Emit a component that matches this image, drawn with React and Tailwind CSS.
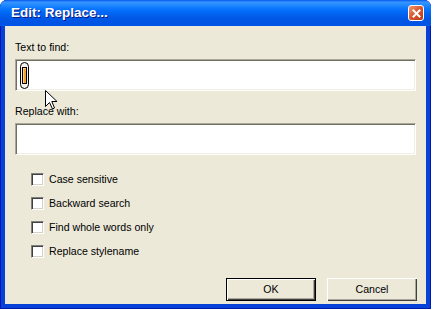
import React from 'react';

const Checkbox = ({ label }) => (
  <div className="flex items-center h-[13px]">
    <div className="w-[13px] h-[13px] border border-t-[#808080] border-l-[#808080] border-r-white border-b-white bg-white shadow-[inset_1px_1px_0_#404040,inset_-1px_-1px_0_#d4d0c8]" />
    <span className="ml-[5px] text-[10.6px] leading-[13px] text-black">{label}</span>
  </div>
);

const TextBox = ({ children }) => (
  <div className="relative h-[32px] w-full bg-white border border-t-[#aca899] border-l-[#aca899] border-r-white border-b-white shadow-[inset_1px_1px_0_#716f64,inset_-1px_-1px_0_#f1efe2]">
    {children}
  </div>
);

const Button = ({ children, primary }) => (
  <button
    className={`w-[90px] h-[23px] text-[10.6px] text-black bg-[#ece9d8] ${
      primary
        ? 'border border-black shadow-[inset_1px_1px_0_#ffffff,inset_-1px_-1px_0_#404040,inset_-2px_-2px_0_#aca899]'
        : 'shadow-[inset_1px_1px_0_#ffffff,inset_-1px_-1px_0_#404040,inset_-2px_-2px_0_#aca899]'
    }`}
  >
    {children}
  </button>
);

export default function App() {
  return (
    <div className="relative w-[433px] h-[310px] bg-white font-['Liberation_Sans',Arial,sans-serif]">
      <div className="w-[431px] h-[309px] flex flex-col rounded-t-[7px] overflow-hidden bg-[#0841d8] shadow-[inset_1px_0_0_#0019b0,inset_-1px_0_0_#0019b0,inset_0_-1px_0_#0019b0]">
        {/* title bar */}
        <div className="h-[26px] flex items-center pl-[11px] pr-[7px] bg-[linear-gradient(to_bottom,#0058ee_0%,#3a93ff_8%,#288eff_16%,#127dff_28%,#036ffc_40%,#0262ee_55%,#0057e5_72%,#0054e3_88%,#0055eb_100%)]">
          <span className="text-white text-[13.5px] font-bold leading-none [text-shadow:1px_1px_0_#0a1883]">
            Edit: Replace...
          </span>
          <div className="ml-auto w-[16px] h-[16px] rounded-[3px] border border-white bg-[linear-gradient(135deg,#f09a76,#d8552a_50%,#b83b12)] flex items-center justify-center">
            <svg width="9" height="9" viewBox="0 0 9 9">
              <path d="M1.5 1.5 L7.5 7.5 M7.5 1.5 L1.5 7.5" stroke="white" strokeWidth="2" strokeLinecap="square" />
            </svg>
          </div>
        </div>

        {/* client area */}
        <div className="flex-1 mx-[5px] mb-[5px] bg-[#ece9d8] flex flex-col px-[10px] pt-[15px] pb-[3px]">
          <label className="text-[10.6px] leading-[13px] text-black">Text to find:</label>
          <div className="mt-[5px]">
            <TextBox>
              <div className="absolute left-[4px] top-[2px] w-[9px] h-[27px] rounded-full border border-black bg-[#f4f2ea] flex items-center justify-center">
                <div className="w-[5px] h-[17px] border border-black bg-[#f0a030] shadow-[inset_1px_1px_0_#ffd080]" />
              </div>
            </TextBox>
          </div>

          <label className="mt-[14px] text-[10.6px] leading-[13px] text-black">Replace with:</label>
          <div className="mt-[5px]">
            <TextBox />
          </div>

          <div className="mt-[18px] pl-[16px] flex flex-col gap-[11px]">
            <Checkbox label="Case sensitive" />
            <Checkbox label="Backward search" />
            <Checkbox label="Find whole words only" />
            <Checkbox label="Replace stylename" />
          </div>

          <div className="mt-auto flex justify-end gap-[11px] -mr-px">
            <Button primary>OK</Button>
            <Button>Cancel</Button>
          </div>
        </div>
      </div>

      {/* mouse pointer */}
      <svg className="absolute left-[45px] top-[90px]" width="13" height="20" viewBox="0 0 13 20">
        <path
          d="M0.5 0.5 L0.5 16.5 L4.5 12.5 L7.5 19 L9.5 18 L6.8 11.5 L12 11.5 Z"
          fill="white"
          stroke="black"
          strokeWidth="1"
          strokeLinejoin="miter"
        />
      </svg>
    </div>
  );
}
